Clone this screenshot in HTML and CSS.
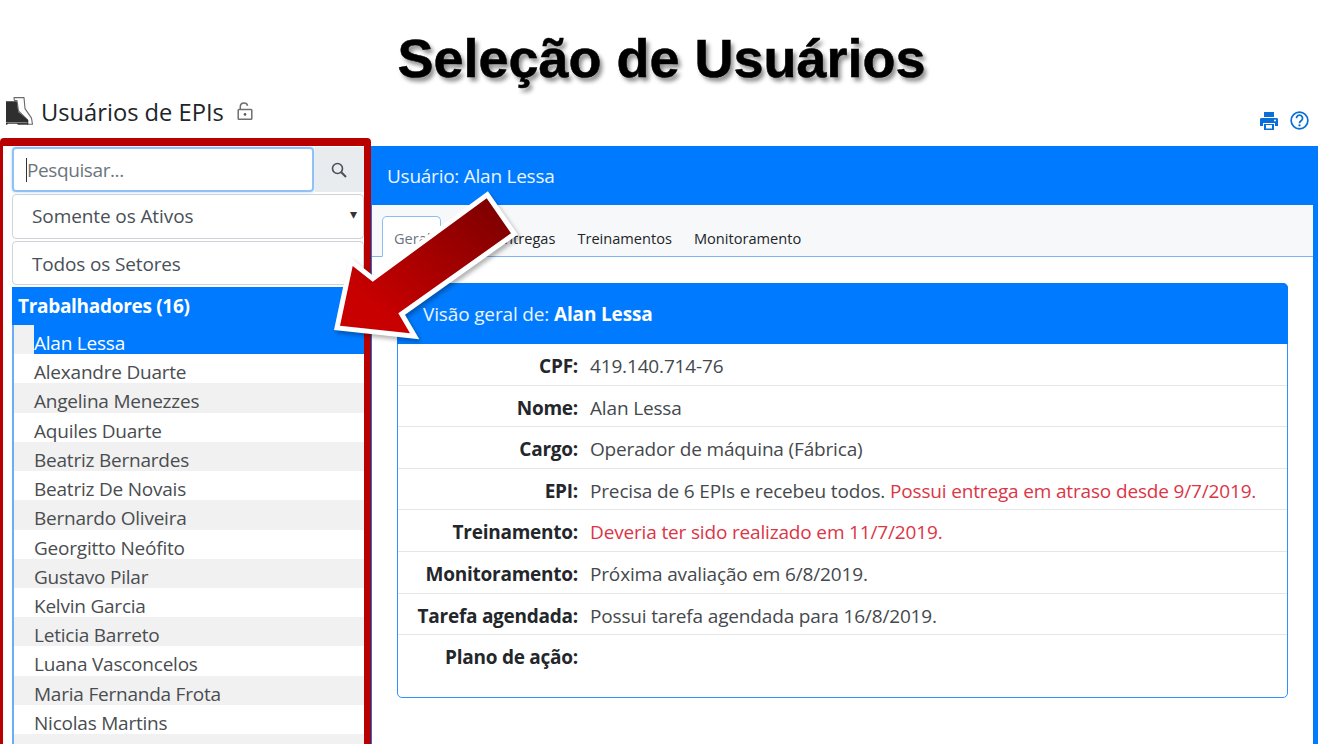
FILE: index.html
```html
<!DOCTYPE html>
<html lang="pt-BR">
<head>
<meta charset="utf-8">
<title>Seleção de Usuários</title>
<link rel="stylesheet" href="styles.css">
</head>
<body>
<div class="slide">
  <h1 class="slide-title">Seleção de Usuários</h1>
  <header class="page-head">
    <div class="page-title">
      <svg class="boot" viewBox="0 0 28 28">
        <path d="M9 .6h10l1 11 6.500 9.500 1 6.200h-5V23L13.500 14 12 3.500H9.400z" fill="#fff" stroke="#6a6a6a" stroke-width="1.100" stroke-linejoin="round"/>
        <path d="M1 4.300h10.700L13.300 15l10 8.300v2H1z" fill="#2f2f2f"/>
        <path d="M1 25.500h22.300v2.200H13l-1-1H3l-1 1H1z" fill="#3a3a3a"/>
      </svg>
      <span>Usuários de EPIs</span>
      <svg class="lock" viewBox="0 0 16 18">
        <rect x="1.200" y="7.500" width="13.600" height="9.800" rx=".8" fill="none" stroke="#6f6f6f" stroke-width="1.500"/>
        <path d="M3.300 7.500V4.300a3.700 3.500 0 0 1 7.300-.6" fill="none" stroke="#6f6f6f" stroke-width="1.500"/>
        <circle cx="8" cy="12.400" r="1.300" fill="#5a5a5a"/>
      </svg>
    </div>
    <div class="page-tools">
      <svg class="tool" viewBox="0 0 20 20"><path d="M5 1h10v5H5z" fill="#0a6fd6"/><path d="M2 7h16a1.500 1.500 0 0 1 1 1.500V15h-3v-3H4v3H1V8.500A1.500 1.500 0 0 1 2 7z" fill="#0a6fd6"/><path d="M5 13h10v6H5z" fill="#0a6fd6"/><path d="M7 14h6v3.500H7z" fill="#fff"/><circle cx="16" cy="9.500" r="1" fill="#fff"/></svg>
      <svg class="tool help" viewBox="0 0 20 20"><circle cx="10" cy="10" r="8.800" fill="none" stroke="#0a6fd6" stroke-width="1.800"/><path d="M6.800 7.600a3.200 3.200 0 1 1 4.900 2.700c-1 .7-1.700 1.300-1.700 2.600" fill="none" stroke="#0a6fd6" stroke-width="1.900"/><circle cx="10" cy="15.200" r="1.200" fill="#0a6fd6"/></svg>
    </div>
  </header>
  <main class="layout">
    <aside class="sidebar">
      <div class="search">
        <div class="search-input"><span class="caret"></span>Pesquisar...</div>
        <div class="search-btn"><svg viewBox="0 0 16 16"><circle cx="6.500" cy="6.500" r="5" fill="none" stroke="#495057" stroke-width="1.600"/><path d="M10.300 10.300L15 15" stroke="#495057" stroke-width="2"/></svg></div>
      </div>
      <div class="picker"><span>Somente os Ativos</span><span class="drop">▾</span></div>
      <div class="picker picker-sector"><span>Todos os Setores</span></div>
      <div class="list">
        <div class="list-head">Trabalhadores (16)</div>
        <div class="row selected"><span>Alan Lessa</span></div>
        <div class="row">Alexandre Duarte</div>
        <div class="row">Angelina Menezzes</div>
        <div class="row">Aquiles Duarte</div>
        <div class="row">Beatriz Bernardes</div>
        <div class="row">Beatriz De Novais</div>
        <div class="row">Bernardo Oliveira</div>
        <div class="row">Georgitto Neófito</div>
        <div class="row">Gustavo Pilar</div>
        <div class="row">Kelvin Garcia</div>
        <div class="row">Leticia Barreto</div>
        <div class="row">Luana Vasconcelos</div>
        <div class="row">Maria Fernanda Frota</div>
        <div class="row">Nicolas Martins</div>
        <div class="row">&nbsp;</div>
      </div>
    </aside>
    <section class="user-panel">
      <div class="user-head">Usuário: Alan Lessa</div>
      <div class="user-body">
        <nav class="tabs">
          <a class="tab active">Geral</a>
          <a class="tab entregas">Entregas</a>
          <a class="tab">Treinamentos</a>
          <a class="tab">Monitoramento</a>
        </nav>
        <div class="overview">
          <div class="overview-head">Visão geral de: <b>Alan Lessa</b></div>
          <dl class="facts">
            <div class="fact"><dt>CPF:</dt><dd>419.140.714-76</dd></div>
            <div class="fact"><dt>Nome:</dt><dd>Alan Lessa</dd></div>
            <div class="fact"><dt>Cargo:</dt><dd>Operador de máquina (Fábrica)</dd></div>
            <div class="fact"><dt>EPI:</dt><dd>Precisa de 6 EPIs e recebeu todos. <span class="late">Possui entrega em atraso desde 9/7/2019.</span></dd></div>
            <div class="fact"><dt>Treinamento:</dt><dd><span class="late">Deveria ter sido realizado em 11/7/2019.</span></dd></div>
            <div class="fact"><dt>Monitoramento:</dt><dd>Próxima avaliação em 6/8/2019.</dd></div>
            <div class="fact"><dt>Tarefa agendada:</dt><dd>Possui tarefa agendada para 16/8/2019.</dd></div>
            <div class="fact last"><dt>Plano de ação:</dt><dd></dd></div>
          </dl>
        </div>
      </div>
    </section>
  </main>
  <div class="frame"></div>
  <svg class="arrow" viewBox="0 0 210 175" width="210" height="175">
    <defs>
      <linearGradient id="ag" x1="0" y1="1" x2="1" y2="0">
        <stop offset="0.2" stop-color="#c80000"/>
        <stop offset="0.95" stop-color="#7c0000"/>
      </linearGradient>
    </defs>
    <polygon class="arrow-shape" points="10,145.700 22.700,86 42.700,101.700 156.700,18.300 181,53.300 68.300,133.300 80,153.300" fill="url(#ag)"/>
  </svg>
</div>
</body>
</html>
```
FILE: styles.css
```css
* { box-sizing: border-box; }
html, body { margin: 0; padding: 0; }
body { width: 1323px; height: 744px; overflow: hidden; background: #fff; font-family: "Open Sans", "Noto Sans", sans-serif; color: #212529; }
.slide { position: relative; width: 1323px; height: 744px; overflow: hidden; }
.slide-title { margin: 0; height: 90px; padding-top: 26px; text-align: center; font: bold 54px/64px "Liberation Sans", sans-serif; color: #000; -webkit-text-stroke: .5px #000; text-shadow: 3px 4px 4px rgba(0,0,0,.45); }
.page-head { display: flex; justify-content: space-between; height: 56px; padding: 6px 14px 0 5px; }
.page-title { display: flex; align-items: flex-start; font-size: 23.700px; line-height: 32px; font-weight: 500; color: #212529; }
.boot { width: 28px; height: 28px; margin: 1px 8px 0 0; }
.lock { width: 16px; height: 18px; margin: 6px 0 0 13px; }
.page-tools { display: flex; gap: 11px; padding-top: 15px; }
.tool { width: 20px; height: 20px; }
.help { width: 19px; height: 19px; }
.layout { display: flex; align-items: flex-start; height: 598px; }
.sidebar { width: 371px; flex: none; padding: 0 7px 0 12px; margin-top: 1px; }
.search { display: flex; height: 45px; margin-bottom: 2px; }
.search-input { flex: 1; display: flex; align-items: center; border: 2px solid #8fc1f5; border-radius: 4px; padding-left: 12px; font-size: 19px; letter-spacing: -.4px; color: #6c757d; box-shadow: 0 0 3px #a9d0f8; }
.caret { width: 1px; height: 24px; background: #333; }
.search-btn { width: 49px; margin-left: 1px; padding-right: 2px; background: #e9ecef; display: flex; align-items: center; justify-content: center; }
.search-btn svg { width: 16px; height: 16px; }
.picker { display: flex; justify-content: space-between; align-items: center; height: 44.500px; margin-bottom: 2px; padding: 0 6px 1px 19px; border: 1px solid #ced4da; border-radius: 4px; font-size: 19px; letter-spacing: -.1px; color: #495057; }
.picker-sector { padding-top: 2px; padding-bottom: 0; letter-spacing: -.15px; }
.drop { font-size: 14px; color: #333; margin-bottom: 4px; }
.list { border-left: 2px solid #6aaef5; }
.list-head { height: 38px; margin-left: -2px; padding: 4px 0 0 6px; background: #007bff; color: #fff; font-size: 19px; font-weight: 700; letter-spacing: -.3px; line-height: 30px; }
.row { height: 29.230px; padding-left: 20px; font-size: 19px; letter-spacing: -.22px; line-height: 37px; color: #4a4d50; white-space: nowrap; }
.row:nth-child(even) { background: #f1f1f1; }
.selected span { display: block; height: 29.230px; background: #007bff; color: #fff; }
.user-panel { flex: 1; margin-right: 5px; border-left: 1px solid #007bff; background: #007bff; height: 598px; }
.user-head { height: 59px; padding-left: 15px; color: #eaf4ff; font-size: 19px; letter-spacing: -.25px; line-height: 60px; }
.user-body { height: 539px; margin-right: 5px; background: #fff; }
.tabs { display: flex; align-items: flex-end; height: 52px; padding-left: 10px; background: #f7f8f9; border-bottom: 1px solid #7db5f0; }
.tab { padding: 0 11px; height: 33px; font-size: 14.600px; line-height: 30px; color: #212529; }
.tab.active { width: 59px; height: 41px; padding-left: 11px; border: 1px solid #8dbdf0; border-bottom-color: #fff; border-radius: 5px 5px 0 0; background: #fff; color: #6c757d; line-height: 42px; margin-bottom: -1px; }
.entregas { margin-left: 21px; padding-left: 34px; }
.overview { margin: 26px 25px 0 25px; border: 1px solid #2f90ff; border-radius: 5px; height: 415px; }
.overview-head { height: 61px; margin: -1px -1px 0; padding-left: 26px; background: #007bff; border-radius: 5px 5px 0 0; color: #eaf4ff; font-size: 19px; letter-spacing: -.15px; line-height: 62px; }
.overview-head b { font-weight: 700; color: #fff; }
.facts { margin: 0; }
.fact { display: flex; height: 41.600px; border-bottom: 1px solid #e4e6e8; font-size: 19px; line-height: 44px; }
.fact.last { border-bottom: 0; }
.fact dt { width: 180px; flex: none; text-align: right; font-weight: 700; letter-spacing: -.25px; color: #23272b; }
.fact dd { margin: 0 0 0 12px; white-space: nowrap; letter-spacing: -.16px; color: #45494d; }
.fact dd .late { color: #dc3545; }
.frame { position: absolute; left: 0; top: 138px; width: 371px; height: 640px; border: solid #b90000; border-width: 8px 7px 8px 3px; border-radius: 4px; }
.arrow { position: absolute; left: 330px; top: 180px; filter: drop-shadow(2px 3px 2px rgba(0,0,0,.3)); }
.arrow-shape { stroke: #fff; stroke-width: 10; stroke-linejoin: miter; stroke-miterlimit: 6; paint-order: stroke; }
```
